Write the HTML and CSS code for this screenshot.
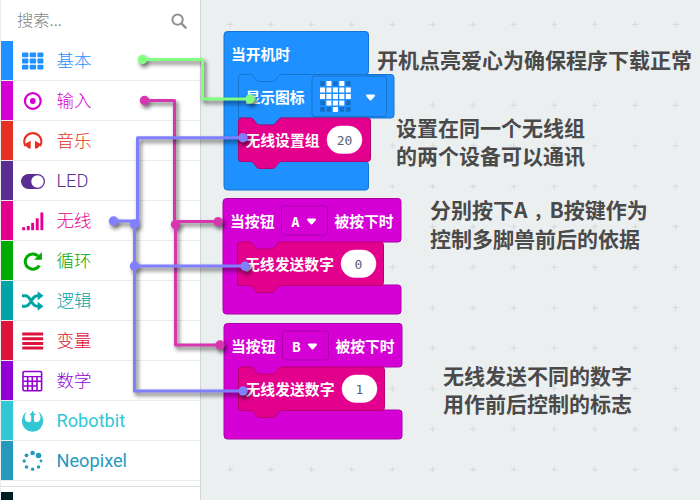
FILE: index.html
```
<!DOCTYPE html>
<html lang="zh-CN">
<head>
<meta charset="utf-8">
<title>MakeCode</title>
<link rel="stylesheet" href="styles.css">
</head>
<body>
<div class="app">
  <aside class="toolbox">
    <div class="search">
      <span>搜索...</span>
      <svg width="16" height="16" viewBox="0 0 16 16" fill="none" stroke="#929292"><circle cx="6.6" cy="6.6" r="5.2" stroke-width="2"/><path d="M10.6 10.6l4 4" stroke-width="2.4" stroke-linecap="round"/></svg>
    </div>
    <ul class="categories">
      <li class="cat basic"><svg class="icon" viewBox="0 0 24 24" fill="currentColor"><rect x="1" y="3.5" width="6.4" height="4.8" rx="1"/><rect x="8.7" y="3.5" width="6.4" height="4.8" rx="1"/><rect x="16.4" y="3.5" width="6" height="4.8" rx="1"/><rect x="1" y="9.6" width="6.4" height="4.8" rx="1"/><rect x="8.7" y="9.6" width="6.4" height="4.8" rx="1"/><rect x="16.4" y="9.6" width="6" height="4.8" rx="1"/><rect x="1" y="15.7" width="6.4" height="4.8" rx="1"/><rect x="8.7" y="15.7" width="6.4" height="4.8" rx="1"/><rect x="16.4" y="15.7" width="6" height="4.8" rx="1"/></svg><span>基本</span></li>
      <li class="cat input"><svg class="icon" viewBox="0 0 24 24"><circle cx="11.8" cy="12" r="7.9" fill="none" stroke="currentColor" stroke-width="2.2"/><circle cx="11.8" cy="12" r="2.9" fill="currentColor"/></svg><span>输入</span></li>
      <li class="cat music"><svg class="icon" viewBox="0 0 24 24"><path d="M4.4 17.1A8.6 8.6 0 1 1 19.2 17.1" fill="none" stroke="currentColor" stroke-width="2.1"/><path d="M3 15.6l6.7-3.8v7.6h-2zM20.6 15.6l-6.7-3.8v7.6h2z" fill="currentColor"/></svg><span>音乐</span></li>
      <li class="cat led"><svg class="icon" viewBox="0 0 24 24"><rect x="0" y="5" width="24" height="15" rx="7.5" fill="currentColor"/><circle cx="16.5" cy="12.5" r="6.2" fill="#fff"/></svg><span class="latin thin">LED</span></li>
      <li class="cat radio"><svg class="icon" viewBox="0 0 24 24" fill="currentColor"><rect x="1.2" y="18.2" width="2.9" height="3"/><rect x="5.8" y="17" width="2.9" height="4.2"/><rect x="10.2" y="13.8" width="2.9" height="7.4"/><rect x="14.8" y="9.3" width="2.9" height="11.9"/><rect x="19.4" y="3.5" width="2.9" height="17.7"/></svg><span>无线</span></li>
      <li class="cat loops"><svg class="icon" viewBox="0 0 24 24"><path d="M18.4 16.4A7.6 7.6 0 1 1 17 7" fill="none" stroke="currentColor" stroke-width="3"/><path d="M20.9 3v7.7h-7.8z" fill="currentColor"/></svg><span>循环</span></li>
      <li class="cat logic"><svg class="icon" viewBox="0 0 24 24"><path d="M1 6.7h3.3c6 0 5.5 10.6 12 10.6H18M1 17.3h3.3c6 0 5.5-10.6 12-10.6H18" fill="none" stroke="currentColor" stroke-width="3"/><path d="M16.7 2.2l5.8 4.5-5.8 4.5zM16.7 12.8l5.8 4.5-5.8 4.5z" fill="currentColor"/></svg><span>逻辑</span></li>
      <li class="cat variables"><svg class="icon" viewBox="0 0 24 24" fill="currentColor"><rect x="1.2" y="3.6" width="21" height="3" rx=".6"/><rect x="1.2" y="8.2" width="21" height="3" rx=".6"/><rect x="1.2" y="12.9" width="21" height="3" rx=".6"/><rect x="1.2" y="17.5" width="21" height="3" rx=".6"/></svg><span>变量</span></li>
      <li class="cat math"><svg class="icon" viewBox="0 0 24 24" fill="none" stroke="currentColor" stroke-width="1.6"><rect x="2" y="2.5" width="18.6" height="19.2" rx="1.2"/><path d="M2 7.6h18.6" stroke-width="1.3"/><path d="M2.5 12.2h17.500M2.500 17h13.500M6.700 8v13.500M11.300 8v13.500M16 8v13.500"/></svg><span>数学</span></li>
      <li class="cat robotbit"><svg class="icon" viewBox="0 0 24 24" fill="currentColor"><path d="M5.600 2.800C2.500 5 1 8.300 1 12.200a10.600 10.600 0 0 0 21.200 0c0-3.900-1.500-7.200-4.600-9.400 1.400 2.800 2.400 4.700 1.700 7.200-.6 2.300-2.700 3.700-5.100 3.100l-1.200-1V6.400l2.300-1.100-2-.6-1.700-3-1.700 3-2 .6 2.300 1.100v5.700l-1.200 1C6.600 13.700 4.500 12.300 3.900 10c-.7-2.500.3-4.400 1.700-7.200z"/></svg><span class="latin">Robotbit</span></li>
      <li class="cat neopixel"><svg class="icon" viewBox="0 0 24 24" fill="currentColor"><circle cx="11.600" cy="4" r="2.300"/><circle cx="17.500" cy="6.500" r="2.800"/><circle cx="5.500" cy="6.300" r="1.900"/><circle cx="3.200" cy="12" r="1.700"/><circle cx="20" cy="12" r="1.400"/><circle cx="5.500" cy="18" r="1.800"/><circle cx="11.600" cy="20.300" r="1.700"/><circle cx="17.500" cy="18" r="1.700"/></svg><span class="latin">Neopixel</span></li>
    </ul>
    <div class="advanced"></div>
  </aside>

  <main class="workspace">
    <svg width="499" height="500" viewBox="201 0 499 500">
      <defs>
        <pattern id="grid" x="210.100" y="4.100" width="40.480" height="40.480" patternUnits="userSpaceOnUse"><path d="M17.200 20.240h6.080M20.240 17.200v6.080" stroke="#d6d8da" stroke-width="1"/></pattern>
      </defs>
      <rect x="201" width="499" height="500" fill="url(#grid)"/>

      <g class="block blue">
        <path d="M227.500 31.500H365.500a3 3 0 0 1 3 3V71.500a3 3 0 0 1-3 3V130H238.500V161.500H365.500a3 3 0 0 1 3 3V187a3 3 0 0 1-3 3H227.500a3.500 3.500 0 0 1-3.500-3.500V35a3.500 3.500 0 0 1 3.500-3.500z"/>
        <path d="M241.500 74.500H250.500c4 0 5 7 9 7H272.500c4 0 5-7 9-7H391a3 3 0 0 1 3 3V115a3 3 0 0 1-3 3H281.500c-4 0-5 7-9 7H259.500c-4 0-5-7-9-7H238.500V77.500a3 3 0 0 1 3-3z"/>
        <rect class="field" x="312" y="76" width="74.500" height="40.500" rx="3"/>
      </g>
      <path fill="#1270c9" d="M320.200 81.200h4.700v4.700h-4.700zM333 81.200h4.700v4.700H333zM345.900 81.200h4.700v4.700h-4.700zM320.200 100.500h4.700v4.700h-4.700zM345.900 100.500h4.700v4.700h-4.700zM320.200 107h4.700v4.700h-4.700zM326.600 107h4.700v4.700h-4.700zM339.500 107h4.700v4.700h-4.700zM345.900 107h4.700v4.700h-4.700z"/>
      <path fill="#fff" d="M326.400 81h5v5h-5zM339.300 81h5v5h-5zM320 87.500h5v5h-5zM326.400 87.500h5v5h-5zM332.900 87.500h5v5h-5zM339.300 87.500h5v5h-5zM345.800 87.500h5v5h-5zM320 94h5v5h-5zM326.400 94h5v5h-5zM332.900 94h5v5h-5zM339.300 94h5v5h-5zM345.800 94h5v5h-5zM326.400 100.400h5v5h-5zM332.900 100.400h5v5h-5zM339.300 100.400h5v5h-5zM332.900 106.900h5v5h-5z"/>
      <path class="caret" d="M367 95.500h7l-3.500 4z"/>
      <g class="block pink"><path d="M241.500 118H250.500c4 0 5 7 9 7H272.500c4 0 5-7 9-7H367.500a3 3 0 0 1 3 3V158.500a3 3 0 0 1-3 3H281.500c-4 0-5 7-9 7H259.500c-4 0-5-7-9-7H241.500a3 3 0 0 1-3-3V121a3 3 0 0 1 3-3z"/></g>
      <rect class="value" x="327" y="126" width="35" height="27.500" rx="13.750"/>
      <text class="label" x="231" y="60" textLength="59">当开机时</text>
      <text class="label" x="245.500" y="102.500" textLength="59">显示图标</text>
      <text class="label" x="245.500" y="146" textLength="74">无线设置组</text>
      <text class="number" x="344.500" y="145">20</text>

      <g class="block magenta"><path d="M226.500 198.500H398a3 3 0 0 1 3 3V239a3 3 0 0 1-3 3H381V252H237.500V285H398a3 3 0 0 1 3 3V311a3 3 0 0 1-3 3H226.500a3.500 3.500 0 0 1-3.500-3.500V202a3.500 3.500 0 0 1 3.500-3.500z"/><rect class="field" x="281.500" y="206" width="46" height="29" rx="3"/></g>
      <g class="block pink"><path d="M240.500 242H249.500c4 0 5 7 9 7H271.500c4 0 5-7 9-7H380.500a3 3 0 0 1 3 3V282.500a3 3 0 0 1-3 3H280.500c-4 0-5 7-9 7H258.500c-4 0-5-7-9-7H240.500a3 3 0 0 1-3-3V245a3 3 0 0 1 3-3z"/></g>
      <rect class="value" x="341" y="250" width="35" height="27.500" rx="13.750"/>
      <path class="caret" d="M308 219.500h7l-3.500 4z"/>
      <text class="label" x="230" y="227" textLength="44.500">当按钮</text>
      <text class="label letter" x="295.500" y="226.500">A</text>
      <text class="label" x="334.500" y="227" textLength="59">被按下时</text>
      <text class="label" x="245" y="270" textLength="89">无线发送数字</text>
      <text class="number" x="358.500" y="269">0</text>

      <g class="block magenta"><path d="M227.500 323.500H399a3 3 0 0 1 3 3V364a3 3 0 0 1-3 3H382V377H238.500V410H399a3 3 0 0 1 3 3V436a3 3 0 0 1-3 3H227.500a3.500 3.500 0 0 1-3.500-3.500V327a3.500 3.500 0 0 1 3.500-3.500z"/><rect class="field" x="282.500" y="331" width="46" height="29" rx="3"/></g>
      <g class="block pink"><path d="M241.500 367H250.500c4 0 5 7 9 7H272.500c4 0 5-7 9-7H381.500a3 3 0 0 1 3 3V407.500a3 3 0 0 1-3 3H281.500c-4 0-5 7-9 7H259.500c-4 0-5-7-9-7H241.500a3 3 0 0 1-3-3V370a3 3 0 0 1 3-3z"/></g>
      <rect class="value" x="342" y="375" width="35" height="27.500" rx="13.750"/>
      <path class="caret" d="M309 344.500h7l-3.500 4z"/>
      <text class="label" x="231" y="352" textLength="44.500">当按钮</text>
      <text class="label letter" x="296.500" y="351.500">B</text>
      <text class="label" x="335.500" y="352" textLength="59">被按下时</text>
      <text class="label" x="245.500" y="395" textLength="89">无线发送数字</text>
      <text class="number" x="359.500" y="394">1</text>

      <g class="note">
        <text x="377" y="68" textLength="315">开机点亮爱心为确保程序下载正常</text>
        <text x="396" y="136" textLength="189">设置在同一个无线组</text>
        <text x="396" y="164" textLength="189">的两个设备可以通讯</text>
        <text x="430" y="218">分别按下A<tspan class="comma" dx="6">，</tspan>B按键作为</text>
        <text x="430" y="246.500" textLength="210">控制多脚兽前后的依据</text>
        <text x="443" y="384" textLength="189">无线发送不同的数字</text>
        <text x="443" y="412" textLength="189">用作前后控制的标志</text>
      </g>
    </svg>
  </main>

  <svg class="links" width="700" height="500" viewBox="0 0 700 500">
    <g class="link magenta-link"><path d="M144.500 100.500H174.500V224M175.500 221.500H218M175.500 224V345H220"/><circle cx="144.500" cy="100.500" r="4.700"/><circle cx="175.500" cy="224.500" r="4.700"/><circle cx="218" cy="221.700" r="4.700"/><circle cx="220" cy="345" r="4.700"/></g>
    <g class="link green-link"><path d="M142.500 59.500H202.500V99H250"/><circle cx="142.500" cy="59.500" r="4.700"/><circle cx="250" cy="99" r="4.700"/></g>
    <g class="link violet-link"><path d="M113.500 221H134.500M137.500 224V137.700H243M134.500 224V391H243M134.500 266H245"/><circle cx="113.500" cy="221" r="4.700"/><circle cx="134.500" cy="224" r="4.700"/><circle cx="243" cy="137.700" r="4.700"/><circle cx="134.500" cy="266" r="4.700"/><circle cx="245" cy="266.300" r="4.700"/><circle cx="243" cy="391" r="4.700"/></g>
  </svg>
</div>
</body>
</html>
```
FILE: styles.css
```
* { box-sizing: border-box; }
body { margin: 0; font-family: "Liberation Sans", "Noto Sans CJK SC", sans-serif; }
.app { position: relative; display: flex; width: 700px; height: 500px; overflow: hidden; background: #ebeff0; }
.toolbox { width: 201px; flex: none; display: flex; flex-direction: column; background: #fff; border-left: 1px solid #eceff1; border-right: 1px solid #d0d4d6; }
.search { height: 41px; flex: none; display: flex; align-items: center; justify-content: space-between; padding: 0 13px 0 16px; color: #858585; font: 300 16.3px "Noto Sans CJK SC", sans-serif; }
.search span { padding-bottom: 4px; }
.categories { list-style: none; margin: 0; padding: 0; }
.cat { --stripe: 12px; height: 40px; display: flex; align-items: center; padding-left: 20px; border-bottom: 1px solid #e9eced; color: var(--c); background: linear-gradient(var(--c), var(--c)) no-repeat 0 0 / var(--stripe) 40px border-box; font: 300 17.5px/37px "Noto Sans CJK SC", sans-serif; }
.cat span { padding-bottom: 2px; }
.icon { width: 24px; height: 24px; margin-right: 11.5px; flex: none; }
.cat .latin { font: 400 18.2px/37px Roboto, sans-serif; padding-bottom: 1px; }
.cat .thin { font-weight: 300; }
.basic { --c: #1e90ff; }
.input { --c: #d400d4; }
.music { --c: #e63022; }
.led { --c: #5c2d91; }
.radio { --c: #e3008c; }
.loops { --c: #00aa00; }
.logic { --c: #00a4a6; }
.variables { --c: #dc143c; }
.math { --c: #9400d3; }
.robotbit { --c: #31c7d5; }
.neopixel { --c: #2699bf; }
.advanced { flex: 1; margin-top: 5px; border-top: 1px solid #dfe2e4; background: linear-gradient(#001f24, #001f24) no-repeat 0 5px / 12px 20px; }
.workspace { flex: none; width: 499px; height: 500px; }
.workspace svg { display: block; }
.block path, .block .field { stroke-width: 1; }
.blue { fill: #1e90ff; stroke: #1873cc; }
.pink { fill: #e3008c; stroke: #b60070; }
.magenta { fill: #d400d4; stroke: #aa00aa; }
.value { fill: #fff; stroke: #fff; stroke-width: .5; }
.caret { fill: #fff; stroke: #fff; stroke-width: 2; stroke-linejoin: round; }
.label { fill: #fff; font: 700 14.8px "Noto Sans CJK SC", sans-serif; }
.letter { font-family: "DejaVu Sans Mono", monospace; font-size: 14px; text-anchor: middle; }
.number { fill: #575e75; font: 400 13px "DejaVu Sans Mono", monospace; text-anchor: middle; }
.note { fill: #4a4a4a; font: 700 21px "Noto Sans CJK SC", sans-serif; }
.comma { font-weight: 900; font-size: 16px; }
.links { position: absolute; left: 0; top: 0; pointer-events: none; }
.link { filter: drop-shadow(2px 3px 2px rgba(0, 0, 0, .6)); }
.link path { fill: none; stroke-width: 3; stroke-linejoin: round; }
.magenta-link { stroke: #d836b0; fill: #d836b0; }
.green-link { stroke: #80ff80; fill: #80ff80; }
.violet-link { stroke: #8080ff; fill: #8080ff; }
.link circle { stroke: none; }
```
